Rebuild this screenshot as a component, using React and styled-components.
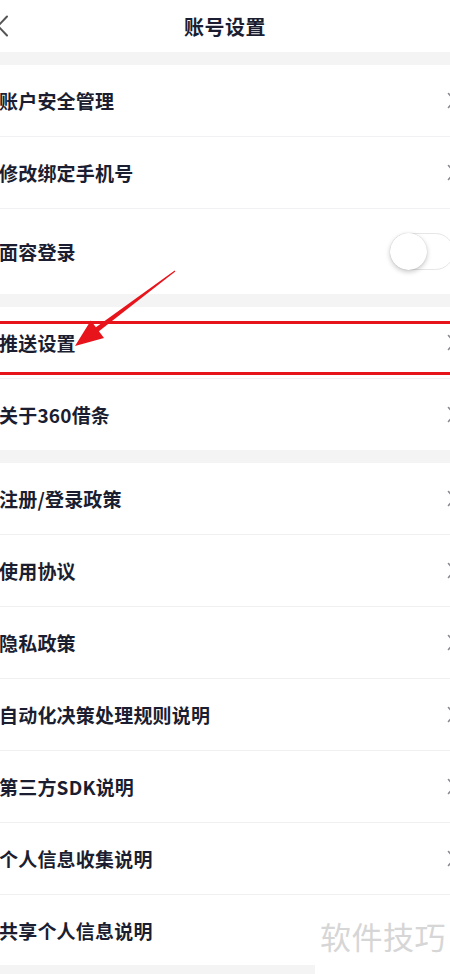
import React from "react";
import styled, { createGlobalStyle } from "styled-components";

const GlobalStyle = createGlobalStyle`
  html, body { margin: 0; padding: 0; background: #f4f4f4; overflow: hidden; }
  body { font-family: "Noto Sans CJK SC", "Noto Sans", sans-serif; }
  * { box-sizing: border-box; }
`;

const Page = styled.div`
  position: relative;
  width: 450px;
  height: 974px;
  overflow: hidden;
  background: #f4f4f4;
`;

const Header = styled.header`
  height: 52px;
  background: #fff;
  display: grid;
  grid-template-columns: 1fr auto 1fr;
  align-items: center;
`;

const BackBtn = styled.div`
  justify-self: start;
  margin-left: -4px;
  display: flex;
  align-items: center;
`;

const Title = styled.h1`
  margin: 0;
  font-size: 20px;
  font-weight: 600;
  color: #1b1e30;
  letter-spacing: 0.5px;
`;

const Section = styled.section`
  background: #fff;
  margin-top: 13px;
  margin-right: -8px;
`;

const Row = styled.div`
  position: relative;
  height: ${(p) => p.$h || 72}px;
  display: flex;
  align-items: center;
  justify-content: space-between;
  padding: 0 2px 0 0;
  border-bottom: ${(p) => (p.$last ? "none" : "1px solid #f1f1f3")};
`;

const Label = styled.span`
  font-size: 19px;
  font-weight: 600;
  color: #1b1e30;
  margin-left: -1px;
  letter-spacing: 0.2px;
`;

const Toggle = styled.div`
  width: 64px;
  height: 37px;
  margin-right: 2px;
  border-radius: 19px;
  border: 1px solid #e6e6e6;
  background: #fff;
  display: flex;
  align-items: center;
`;

const Knob = styled.div`
  width: 37px;
  height: 37px;
  margin-left: -1px;
  border-radius: 50%;
  background: #fff;
  box-shadow: 0 2px 5px rgba(0, 0, 0, 0.22), 0 0 1px rgba(0, 0, 0, 0.2);
`;

const Highlight = styled.div`
  position: absolute;
  left: -6px;
  right: -6px;
  top: 14px;
  bottom: 3px;
  border: 3px solid #e8141b;
  pointer-events: none;
`;

const ArrowLayer = styled.svg`
  position: absolute;
  left: 0;
  top: 0;
  pointer-events: none;
`;

const Watermark = styled.div`
  position: absolute;
  right: 0;
  bottom: 0;
  width: 135px;
  height: 77px;
  background: #fff;
  display: flex;
  align-items: center;
  justify-content: flex-end;
  padding-right: 4px;
  font-size: 31px;
  font-weight: 400;
  color: #d6d6d6;
  letter-spacing: 0.5px;
`;

const Chevron = () => (
  <svg width="9" height="17" viewBox="0 0 9 17">
    <path d="M1.5 1.5 L7.5 8.5 L1.5 15.5" fill="none" stroke="#8a8a8f" strokeWidth="1.6" strokeLinecap="round" strokeLinejoin="round" />
  </svg>
);

const BackIcon = () => (
  <svg width="14" height="22" viewBox="0 0 14 22">
    <path d="M11 1.5 L2 11 L11 20.5" fill="none" stroke="#555" strokeWidth="2" strokeLinecap="round" strokeLinejoin="round" />
  </svg>
);

const Item = ({ label, h, last, children, right }) => (
  <Row $h={h} $last={last}>
    <Label>{label}</Label>
    {right || <Chevron />}
    {children}
  </Row>
);

export default function App() {
  return (
    <>
      <GlobalStyle />
      <Page>
        <Header>
          <BackBtn>
            <BackIcon />
          </BackBtn>
          <Title>账号设置</Title>
          <span />
        </Header>

        <Section>
          <Item label="账户安全管理" />
          <Item label="修改绑定手机号" />
          <Item
            label="面容登录"
            h={85}
            last
            right={
              <Toggle>
                <Knob />
              </Toggle>
            }
          />
        </Section>

        <Section>
          <Item label="推送设置">
            <Highlight />
          </Item>
          <Item label="关于360借条" h={71} last />
        </Section>

        <Section>
          <Item label="注册/登录政策" />
          <Item label="使用协议" />
          <Item label="隐私政策" />
          <Item label="自动化决策处理规则说明" />
          <Item label="第三方SDK说明" />
          <Item label="个人信息收集说明" />
          <Item label="共享个人信息说明" h={70} last />
        </Section>

        <ArrowLayer width="450" height="974" viewBox="0 0 450 974">
          <polygon
            points="75,346 104,338 98.9,331.2 175.3,271.4 174.7,270.6 95.9,327.2 90.8,320.4"
            fill="#e8141b"
          />
        </ArrowLayer>

        <Watermark>软件技巧</Watermark>
      </Page>
    </>
  );
}
